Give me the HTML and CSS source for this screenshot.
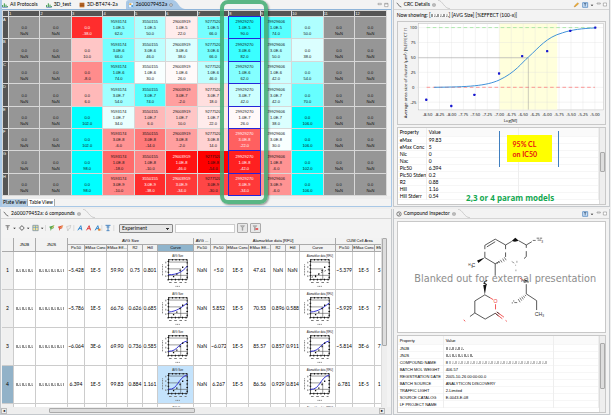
FILE: index.html
```html
<!DOCTYPE html>
<html lang="en">
<head>
<meta charset="utf-8">
<title>Screening workbench</title>
<link rel="stylesheet" href="styles.css">
</head>
<body>
<main class="app">
  <section class="pane plate-pane">
    <nav class="tabs">
      <a class="tab" href="#"><svg class="ic" viewBox="0 0 18 18"><path d="M2 15V9M7 15V4M12 15V8M16 15v-3" stroke="#3a9a46" stroke-width="3"/><path d="M1 16h16" stroke="#3568a8" stroke-width="2"/></svg>All Protocols</a>
      <a class="tab" href="#"><svg class="ic" viewBox="0 0 18 18"><path d="M2 15V9M7 15V4M12 15V8M16 15v-3" stroke="#3a9a46" stroke-width="3"/><path d="M1 16h16" stroke="#3568a8" stroke-width="2"/></svg>3D_test</a>
      <a class="tab" href="#"><svg class="ic" viewBox="0 0 18 18"><path d="M2 2h14v14H2z" fill="#c8742a"/><path d="M2 6h14M2 11h14" stroke="#7b3b10" stroke-width="2"/></svg>3D-BT474-2a</a>
      <a class="tab active" href="#"><svg class="ic" viewBox="0 0 18 18"><path d="M2 1h14v16H2z" fill="#eef6ff" stroke="#4f8fc8"/><path d="M4 4h6v5H4z" fill="#e0a33c"/><path d="M10 9h5v6h-5z" fill="#5aa0dc"/></svg>2600079452a <svg class="close" viewBox="0 0 12 12"><path d="M2 2l8 8M10 2l-8 8" stroke="#777" stroke-width="4"/><path d="M2 2l8 8M10 2l-8 8" stroke="#fff" stroke-width="1.5"/></svg></a>
      <svg class="swoop" viewBox="0 0 36 27" preserveAspectRatio="none"><path d="M0 0C14 0 18 27 36 27H0z" fill="#a9c8e6"/></svg>
      <svg class="winctl" viewBox="0 0 36 18"><path d="M3 4h10v4H3zM23 4h10v10H23zM23 6h10" fill="#fff" stroke="#777" stroke-width="1.5"/></svg>
    </nav>
    <div class="plate-wrap"><table class="plate" id="plate"></table></div>
    <nav class="views"><a class="on" href="#">Plate View</a><a href="#">Table View</a></nav>
    <div class="marker"></div>
  </section>

  <section class="pane">
    <header class="bar">
      <svg class="ic" viewBox="0 0 18 18"><path d="M2 3c5 0 5 11 14 12" fill="none" stroke="#333" stroke-width="2"/></svg>
      <span>CRC Details</span>
      <svg class="close" viewBox="0 0 12 12"><path d="M2 2l8 8M10 2l-8 8" stroke="#777" stroke-width="4"/><path d="M2 2l8 8M10 2l-8 8" stroke="#fff" stroke-width="1.5"/></svg>
      <svg class="curve" viewBox="0 0 36 27" preserveAspectRatio="none"><path d="M0 1C14 1 18 26 36 26" fill="none" stroke="#bbb" stroke-width="2"/></svg>
      <svg class="tools wide" viewBox="0 0 102 18"><path d="M3 15l3-5 8-8 3 3-8 8z" fill="#f0b030" stroke="#a86a20"/><path d="M29 2h15v14H29z" fill="#cfe4fa" stroke="#3d78b8" stroke-width="2"/><path d="M33 5h7M36.500 5v8" stroke="#246" stroke-width="2"/><path d="M53 8h8l-4 4z" fill="#111"/><path d="M72 3h10v3H72zM91 3h10v9H91z" fill="#fff" stroke="#777" stroke-width="1.500"/></svg>
    </header>
    <p class="showing">Now showing: [<span class="redact short"></span>] [AVG Size] [%EFFECT (100-x)]</p>
    <div class="box chart"><svg id="crc" viewBox="14 66 638 310" preserveAspectRatio="none"></svg></div>
    <div class="box props">
      <table class="kv crc-kv">
        <colgroup><col class="c-prop"><col class="c-val"><col></colgroup>
        <thead><tr><th>Property</th><th>Value</th><th></th></tr></thead>
        <tbody>
          <tr><td>eMax</td><td>99.83</td><td></td></tr>
          <tr><td>eMax Conc</td><td>5</td><td></td></tr>
          <tr><td>Nic</td><td>0</td><td></td></tr>
          <tr><td>Nac</td><td>0</td><td></td></tr>
          <tr><td>Pic50</td><td>6.394</td><td></td></tr>
          <tr><td>Pic50 Stderr</td><td>0.2</td><td></td></tr>
          <tr><td>R2</td><td>0.88</td><td></td></tr>
          <tr><td>Hill</td><td>1.16</td><td></td></tr>
          <tr><td>Hill Stderr</td><td>0.54</td><td></td></tr>
        </tbody>
      </table>
      <div class="vbar"><i class="thumb mid"></i></div>
      <div class="range"><span>95% CL<br>on IC50</span></div>
      <div class="models">2,3 or 4 param models</div>
    </div>
  </section>

  <section class="pane">
    <header class="bar">
      <svg class="ic" viewBox="0 0 18 18"><path d="M2 3c5 0 5 11 14 12" fill="none" stroke="#333" stroke-width="2"/></svg>
      <span>2600079452a: 6 compounds</span>
      <svg class="close" viewBox="0 0 12 12"><path d="M2 2l8 8M10 2l-8 8" stroke="#777" stroke-width="4"/><path d="M2 2l8 8M10 2l-8 8" stroke="#fff" stroke-width="1.5"/></svg>
      <svg class="curve" viewBox="0 0 36 27" preserveAspectRatio="none"><path d="M0 1C14 1 18 26 36 26" fill="none" stroke="#bbb" stroke-width="2"/></svg>
    </header>
    <div class="toolbar">
      <svg class="tb-icons" viewBox="14 0 332 24" aria-hidden="true">
        <path d="M18 5h13M24.500 5v13M21 9h7" stroke="#888" stroke-width="3"/><path d="M41 11h8l-4 4zM82 11h8l-4 4zM124 11h8l-4 4z" fill="#222"/>
        <circle cx="67" cy="12" r="5.500" fill="none" stroke="#777" stroke-width="2.500"/><path d="M67 3v4M67 17v4M58 12h4M72 12h4" stroke="#777" stroke-width="2"/>
        <path d="M100 4h16v16h-16z" fill="#f5e59a" stroke="#68849f" stroke-width="2"/><path d="M108 5v14M100 10h16" stroke="#5d95c8" stroke-width="2"/>
        <path d="M138 3v18M223 3v18M307 3v18M343 3v18" stroke="#aaa"/>
        <path d="M149 8l15-4-2 9-6 2-2 6-2-8z" fill="#4da651"/><path d="M175 8l15-4-2 9-6 2-2 6-2-8z" fill="#df5041"/><path d="M201 8l13-4-2 9-5 2-2 6-2-8z" fill="#eee" stroke="#999"/>
        <path d="M156 13l8-8M182 13l8-8" stroke="#f3c460" stroke-width="3"/>
        <path d="M235 19l9-14 3 14M238 14h8" fill="none" stroke="#2f87cf" stroke-width="3"/><path d="M261 19l8-14 4 14M264 14h8" fill="none" stroke="#df4040" stroke-width="3"/><path d="M287 19l8-14 4 14M290 14h8" fill="none" stroke="#2f87cf" stroke-width="3"/><path d="M296 14h7v6h-7z" fill="#e7892f"/>
        <path d="M318 4h15M325.500 4v15M321 9h9M321 20h9" stroke="#4d87c1" stroke-width="3"/>
      </svg>
      <select aria-label="Group by"><option>Experiment</option></select>
      <input type="text" aria-label="Filter">
      <button type="button" aria-label="Apply filter"><svg viewBox="0 0 18 18"><path d="M3 2h12l-5 6v8H8V8z" fill="#bbb" stroke="#666"/></svg></button>
      <button type="button" aria-label="Clear filter"><svg viewBox="0 0 18 18"><path d="M2 2h11l-5 6v8H6V8z" fill="#bbb" stroke="#666"/><path d="M9 12h8" stroke="#d22" stroke-width="4"/></svg></button>
    </div>
    <div class="grid-wrap">
      <div class="grid-clip"><table class="grid" id="grid"></table></div>
      <div class="vbar"><i class="thumb low"></i></div>
    </div>
    <div class="hbar"><b>◂</b><i></i><b>▸</b></div>
  </section>

  <section class="pane">
    <header class="bar">
      <svg class="ic" viewBox="0 0 18 18"><circle cx="9" cy="9" r="6.500" fill="#fff" stroke="#444" stroke-width="2"/><path d="M7 5l5 4-5 4" fill="none" stroke="#555" stroke-width="2"/></svg>
      <span>Compound Inspector</span>
      <svg class="close" viewBox="0 0 12 12"><path d="M2 2l8 8M10 2l-8 8" stroke="#777" stroke-width="4"/><path d="M2 2l8 8M10 2l-8 8" stroke="#fff" stroke-width="1.5"/></svg>
      <svg class="curve" viewBox="0 0 36 27" preserveAspectRatio="none"><path d="M0 1C14 1 18 26 36 26" fill="none" stroke="#bbb" stroke-width="2"/></svg>
      <svg class="tools" viewBox="24 0 78 18"><path d="M29 2h15v14H29z" fill="#cfe4fa" stroke="#3d78b8" stroke-width="2"/><path d="M33 5h7M36.500 5v8" stroke="#246" stroke-width="2"/><path d="M53 8h8l-4 4z" fill="#111"/><path d="M72 3h10v3H72zM91 3h10v9H91z" fill="#fff" stroke="#777" stroke-width="1.500"/></svg>
    </header>
    <div class="box molecule">
      <svg viewBox="14 48 638 340">
        <g fill="none" stroke="#333" stroke-width="2.500">
          <path d="M281 132V120L313 101L345 119V132M287 125L313 109M281 140V158L313 177L326 170M345 142V156M345 119L364 108M386 106L409 119V128M409 138V155L402 161M313 177V214M409 119L426 109"/>
          <path d="M281 273L250 292V329L282 348L313 330M281 273L297 282M250 329L235 340M409 240V270L441 291V320M409 234L397 228"/>
          <path d="M364 170l8 5M380 168v6M377 195v5M376 180v3" stroke="#888"/>
          <path d="M429 105h9M441 98h8M451 98h7M444 104h11" stroke="#555"/>
          <path d="M364 298h4M372 297h9M368 292h4" stroke="#555"/>
        </g>
        <path d="M281 158l-24 9 4 8zM364 107l11-10 11 9-12 3zM281 273l-5-30h10z" fill="#111"/>
        <path d="M277 236l10 6M288 228l-9 6" stroke="#222" stroke-width="4"/>
        <path d="M318 174l2 4M323 169l4 6M329 165l5 8M336 161l5 9M341 157l6 9M405 273l3 4M400 276l4 6M395 279l5 8M389 282l6 9M384 286l6 10" stroke="#333" stroke-width="2"/>
        <path d="M402 226l14 8M401 234l13-4" stroke="#333" stroke-width="4"/>
        <g stroke="#e33" stroke-width="2.500" fill="none"><path d="M297 282l10 6M314 302v16M313 330l22 17M318 326l22 16M389 221l11 7M216 350l4 5M345 352l4 3"/></g>
        <path d="M313 330l10 8M318 326l8 6" stroke="#333" stroke-width="2.500"/>
        <g class="atoms"><text x="308" y="298" class="red">O</text><text x="435" y="339">CH<tspan dy="4" class="sub">3</tspan></text><text x="240" y="186">C</text><text x="230" y="184" class="sub">H</text><text x="238" y="191" class="sub">3</text><text x="455" y="113" class="sub">3</text></g>
        <text class="blank" x="344" y="232">Blanked out for external presentation</text>
      </svg>
    </div>
    <div class="box compound">
      <table class="kv comp-kv">
        <colgroup><col class="c-prop"><col class="c-val"><col></colgroup>
        <thead><tr><th>Property</th><th>Value</th><th></th></tr></thead>
        <tbody>
          <tr><td>JNJB</td><td><span class="redact short"></span></td><td></td></tr>
          <tr><td>JNJS</td><td><span class="redact"></span></td><td></td></tr>
          <tr><td>COMPOUND NAME</td><td>8 <span class="redact long"></span></td><td></td></tr>
          <tr><td>BATCH MOL WEIGHT</td><td>406.57</td><td></td></tr>
          <tr><td>REGISTRATION DATE</td><td>2005-10-26 00:00:00.0</td><td></td></tr>
          <tr><td>BATCH SOURCE</td><td>ANALYTICON DISCOVERY</td><td></td></tr>
          <tr><td>TRAFFIC LIGHT</td><td>2-Limited</td><td></td></tr>
          <tr><td>SOURCE CATALOG</td><td>E-0043-E-08</td><td></td></tr>
          <tr><td>LF PROJECT NAME</td><td></td><td></td></tr>
        </tbody>
      </table>
      <div class="vbar"><i class="thumb high"></i></div>
    </div>
  </section>
</main>
<script src="app.js"></script>
</body>
</html>
```
FILE: styles.css
```css
* { box-sizing: border-box; }
html, body { height: 100%; }
body {
  margin: 0;
  background: #eeeeee;
  color: #000;
  font: 5px/7px "Lato", sans-serif;
  overflow: hidden;
}
a { color: inherit; text-decoration: none; }
p { margin: 0; }
table { border-spacing: 0; table-layout: fixed; width: 100%; }
th, td { padding: 0; font-weight: normal; white-space: nowrap; overflow: hidden; }
svg { display: block; }

.app {
  height: 100vh;
  display: grid;
  grid-template-columns: minmax(0, 391fr) minmax(0, 217fr);
  grid-template-rows: minmax(0, 207fr) minmax(0, 206fr);
  gap: 2px 1px;
  padding-right: 1px;
}
.pane {
  position: relative;
  display: flex;
  flex-direction: column;
  min-height: 0;
  background: #f3f3f3;
  border: 1px solid #c4c8cc;
  border-width: 0 1px 1px 1px;
}
.ic { width: 6px; height: 6px; flex: none; }
.close { width: 4px; height: 4px; flex: none; }
.curve { width: 12px; height: 9px; flex: none; }

.plate-pane { border: 0 solid #a9c8e6; border-width: 0 1px 1px 2px; }
.tabs { display: flex; height: 10px; border-bottom: 1px solid #8fb4d8; }
.tab { display: flex; align-items: center; gap: 2px; padding: 0 8px 0 0; }
.tab.active { background: #a9c8e6; padding: 0 0 0 2px; border-radius: 3px 0 0 0; }
.swoop { width: 12px; height: 9px; }
.winctl { width: 12px; height: 6px; margin: 2px 2px 0 auto; }
.plate-wrap { flex: 1; min-height: 0; padding: 0 4px 0 0; }
.plate { height: 100%; border-spacing: 1px; background: #d8d8d8; font: 4px/6px "Liberation Sans", sans-serif; text-align: center; color: #111; }
.plate th { background: #555; color: #fff; text-align: left; vertical-align: top; line-height: 5px; }
.plate tr:first-child th { height: 5px; }
.plate th:first-child { width: 5px; }
.plate td { vertical-align: bottom; padding-bottom: 1px; background: #969696; }
.plate td.light { color: #fff; }
.plate td.sel { outline: 1px solid #2626d8; }
.views { display: flex; height: 10px; align-items: flex-end; border-top: 3px solid #eee; }
.views a { padding: 0 1px; background: #fff; border-right: 1px solid #aaa; }
.views a.on { background: #b8cfe4; }
.marker {
  position: absolute;
  left: 56%; width: 12.5%; top: 0; bottom: 2px;
  border: 4px solid rgba(62, 170, 112, .85);
  border-radius: 8px;
  box-shadow: 1px 1px 2px rgba(0, 0, 0, .4);
}

.bar { display: flex; align-items: center; gap: 2px; height: 10px; padding: 0 2px; flex: none; border-bottom: 1px solid #d5d5d5; }
.tools { width: 26px; height: 6px; margin-left: auto; }
.tools.wide { width: 34px; }
.showing { padding: 2px 3px; line-height: 7px; }
.box { position: relative; margin: 0 3px; background: #fff; border: 1px solid #c8c8c8; min-height: 0; }
.chart { flex: 104 0 0; margin-bottom: 2px; background: #f3f3f3; }
.chart svg, .molecule svg { width: 100%; height: 100%; }
.props { flex: 78 0 0; margin-bottom: 1px; display: flex; }
.molecule { flex: 113 0 0; margin-top: 2px; margin-bottom: 2px; }
.compound { flex: 78 0 0; margin-bottom: 1px; display: flex; overflow: hidden; }
#crc text { font: 13px "Open Sans", sans-serif; fill: #000; text-anchor: middle; }
.atoms text { font: 16px "Liberation Sans", sans-serif; fill: #333; }
.atoms .sub { font-size: 10px; }
.atoms .red { fill: #e33; }
.blank { font: 30px "DejaVu Sans", sans-serif; fill: #8d8d8d; text-anchor: middle; }

.kv { flex: 1; align-self: flex-start; }
.kv th, .kv td { text-align: left; padding-left: 2px; height: 7px; border-right: 1px solid #eee; box-shadow: inset 0 -1px #f6f6f6; }
.kv th { height: 9px; background: #fafafa; }
.crc-kv .c-prop { width: 29px; }
.crc-kv .c-val { width: 92px; }
.comp-kv { font-family: "Liberation Sans", sans-serif; font-size: 4px; }
.comp-kv .c-prop { width: 46px; }
.comp-kv .c-val { width: 110px; }
.vbar { width: 6px; flex: none; background: #eee; border-left: 1px solid #ddd; display: flex; flex-direction: column; }
.thumb { margin: 0 0 auto; border: 1px solid #aaa; border-radius: 1px; background: #ddd; }
.thumb.mid { margin-top: 24px; height: 20px; }
.thumb.high { margin-top: 7px; height: 46px; }
.thumb.low { margin-top: 0; height: 108px; }
.range {
  position: absolute;
  left: 49%; width: 29%; top: 3px; height: 36px;
  border: 1px solid #3f7fc0; border-width: 0 1px;
  display: flex; align-items: center; justify-content: center;
}
.range span { background: #ffff00; color: #e81010; font: bold 7px/10px "Lato", sans-serif; padding: 4px 15px 3px 6px; }
.models { position: absolute; left: 33%; bottom: 1px; font: bold 8px/10px "Open Sans", sans-serif; color: #12a850; white-space: nowrap; }

.redact { display: inline-block; width: 27px; height: 3px; background: repeating-linear-gradient(90deg, #999 0 2px, #fff 2px 3px, #ccc 3px 5px, #fff 5px 6px); border-bottom: 1px dotted #999; }
.redact.short { width: 18px; }
.redact.long { width: 98px; opacity: .6; }

.toolbar { display: flex; align-items: center; height: 18px; flex: none; padding-left: 3px; }
.tb-icons { width: 111px; height: 8px; margin-right: 4px; }
.toolbar select {
  width: 54px; height: 9px; padding: 0 2px; border: 1px solid #888; border-radius: 1px;
  font: inherit; color: #111; appearance: none;
  background: linear-gradient(135deg, #333 50%, transparent 50%) 48px 3px / 2px 2px no-repeat, linear-gradient(225deg, #333 50%, transparent 50%) 46px 3px / 2px 2px no-repeat, #e6e6e6;
}
.toolbar input { width: 60px; height: 9px; margin: 0 2px; padding: 0 1px; border: 1px solid #ccc; font: inherit; background: #fff; }
.toolbar button { width: 11px; height: 10px; margin-right: 2px; padding: 1px; border: 1px solid #aaa; border-radius: 1px; background: #e8e8e8; }
.toolbar button svg { width: 7px; height: 6px; }
.grid-wrap { flex: 1; min-height: 0; display: flex; margin: 1px 4px 0 1px; }
.grid-clip { flex: 1; min-width: 0; overflow: hidden; background: #fff; }
.grid { text-align: center; }
.grid th, .grid td { border-right: 1px solid #ccc; border-bottom: 1px solid #ccc; }
.grid th { height: 7px; font-family: "Liberation Sans", sans-serif; font-size: 4px; line-height: 6px; background: #f2f2f2; border-color: #aaa; }
.grid th.on { background: #8fb4cc; }
.grid td { height: 38px; }
.grid td:first-child { background: #f0f0f0; }
.grid tr.cur td:first-child { background: #92b2c8; }
.grid tr.cur td.curve-a { background: #c4e3fc; }
.grid .redact { width: 80%; }
.mini { width: 100%; height: 37px; }
.mini text { font: 8px "Liberation Sans", sans-serif; text-anchor: middle; fill: #111; }
.hbar { display: flex; height: 7px; flex: none; background: #eee; align-items: center; padding-right: 6px; }
.hbar b { width: 6px; height: 6px; border: 1px solid #bbb; font-size: 4px; line-height: 4px; text-align: center; }
.hbar i { width: 38%; height: 5px; border: 1px solid #aaa; border-radius: 1px; background: #ddd; margin-left: 11%; margin-right: auto; }
```
FILE: app.js
```js
// Plate view: identifiers and effects by column, concentrations by row.
const conc = ['1.0E-5', '3.0E-6', '1.0E-6', '3.0E-7', '1.0E-7', '3.0E-8', '1.0E-8', '3.0E-9'];
const ids = { 4: '9593174', 5: '3550155', 6: '29003919', 7: '9277520', 8: '29929270', 9: '29929606' };
const effect = {
  3: [-38, 10, -8, 6, 102, 102, 98, 98],
  4: [62, 66, 74, 54, 34, -6, -18, -10],
  5: [50, 46, 30, 74, 6, -14, -10, -38],
  6: [22, 38, 26, -2, 10, -2, -46, -34],
  7: [66, 66, 46, 18, 22, 14, -54, -30],
  8: [90, 82, 62, 42, 26, -22, -42, -34],
  9: [74, 50, 42, 42, 38, 30, -6, -6],
  10: [50, 38, 54, 70, 106, 106, 102, 106]
};
function heat(v) {
  const t = v >= 28 ? (v - 28) / 70 : (28 - v) / 80;
  const c = Math.round(255 * Math.max(0, 1 - t));
  return v >= 28 ? `rgb(${c},255,255)` : `rgb(255,${c},${c})`;
}
let html = '<tr><th></th>';
for (let c = 1; c <= 12; c++) html += `<th>${c}</th>`;
html += '</tr>';
conc.forEach((k, r) => {
  html += `<tr><th>${'ABCDEFGH'[r]}</th>`;
  for (let c = 1; c <= 12; c++) {
    if (!effect[c]) { html += '<td>0.0<br>NaN</td>'; continue; }
    const v = effect[c][r];
    const cls = [c === 8 ? 'sel' : '', v < -20 && c !== 7 ? 'light' : ''].join(' ');
    html += `<td class="${cls}" style="background:${heat(v)}">${ids[c] ? ids[c] + '<br>' + k : '0.0'}<br>${v.toFixed(1)}</td>`;
  }
  html += '</tr>';
});
document.getElementById('plate').innerHTML = html;

// Dose-response chart.
const X = v => 105 + (v + 8.5) * 147.1;
const Y = v => 265 - v * 1.82;
let s = '<rect x="76" y="70" width="571" height="264" fill="#fff" stroke="#999"/><rect x="326" y="71" width="178" height="262" fill="#ffffdc"/>';
for (let i = 0; i <= 14; i++) {
  const v = -8.5 + i * 0.25;
  s += `<path d="M${X(v)} 71V338" stroke="#ddd"/><text x="${X(v)}" y="351">${v.toFixed(2)}</text>`;
}
for (let v = -25; v <= 100; v += 25) s += `<path d="M72 ${Y(v)}H647" stroke="#ddd"/><text x="61" y="${Y(v) + 5}">${v}</text>`;
s += '<path d="M102 83H620" stroke="#8be08b" stroke-width="2" stroke-dasharray="11 8"/><path d="M102 265H620" stroke="#f66" stroke-width="2" stroke-dasharray="11 8"/><path d="M76 175H415V333" fill="none" stroke="#999" stroke-width="1.5"/>';
s += '<path d="M125 265C230 264 285 261 325 243C375 220 395 190 415 173C450 142 470 113 520 99C550 89 580 86 621 84" fill="none" stroke="#3a8fd8" stroke-width="3"/>';
[[101, 303], [178, 322], [249, 288], [325, 223], [396, 170], [473, 155], [544, 93], [621, 83]].forEach(p => {
  s += `<rect x="${p[0] - 3.5}" y="${p[1] - 3.5}" width="7" height="7" rx="2" fill="#1818d0"/>`;
});
s += '<text x="360" y="370">Log[M]</text><text transform="translate(42 221) rotate(-90)">Average area size of cluster (µm²) [%EFFECT (1</text>';
document.getElementById('crc').innerHTML = s;

// Compound grid.
const rows = [
  ['~5.428', '1E-5', '59.90', '0.75', '0.801', 'NaN', '&lt;5.0', '1E-5', '47.61', 'NaN', 'NaN', '~5.379', '1E-5', '5'],
  ['~5.786', '1E-5', '66.76', '0.626', '0.685', 'NaN', '5.852', '1E-5', '70.53', '0.896', '0.588', '~5.929', '1E-5', '7'],
  ['~6.064', '3E-6', '69.90', '0.736', '0.585', 'NaN', '~6.072', '1E-5', '85.57', '0.857', '0.911', '~5.814', '3E-6', '7'],
  ['6.394', '1E-5', '99.83', '0.884', '1.161', 'NaN', '6.267', '1E-5', '86.56', '0.929', '0.814', '6.781', '1E-5', '1']
];
function mini(title, n, scatter) {
  const paths = ['M32 70C60 70 74 62 90 44', 'M32 68C58 66 72 54 90 40', 'M32 72C62 72 62 46 90 40', 'M32 72C62 74 62 34 90 28'];
  const curve = scatter ? 'stroke="#333" stroke-dasharray="4 7" d="M36 78L90 52"' : `stroke="#3030d0" d="${paths[n]}"`;
  return `<svg class="mini" viewBox="0 0 108 114"><text x="61" y="15">${title}</text>
<rect x="32" y="24" width="58" height="61" fill="none" stroke="#111" stroke-width="2"/><path d="M32 31H90M32 52H70V85M32 72H90" fill="none" stroke="#333" stroke-width="1.5"/>
<rect x="32" y="24" width="58" height="61" fill="none" stroke="#111" stroke-width="5" stroke-dasharray="3 8"/>
<path fill="none" stroke-width="3" ${curve}/><path d="M46 76h4M56 68h4M66 57h4M74 47h4" stroke="#111" stroke-width="4"/>
<path d="M34 94h8M50 94h8M66 94h8M82 94h6M24 30v5M24 44v5M24 58v5M24 72v5" stroke="#777" stroke-width="3"/><path d="M14 38v36M54 106h14" stroke="#777" stroke-width="3" stroke-dasharray="3 2"/></svg>`;
}
const widths = [12, 22, 32, 17, 22, 21, 15, 15, 36, 17, 16, 22, 22, 15, 14, 36, 17, 22, 9];
const heads = ['Pic50', 'EMax Conc', 'EMax Eff...', 'R2', 'Hill', 'Curve'];
let g = '<colgroup>' + widths.map(w => `<col style="width:${w}px">`).join('') + '</colgroup>';
g += '<tr><th rowspan="2"></th><th rowspan="2">JNJB</th><th rowspan="2">JNJS</th><th colspan="6">AVG Size</th><th>AVG ...</th><th colspan="6">Alamarblue data [RFU]</th><th colspan="3">CUM Cell Area</th></tr><tr>';
g += heads.map((h, i) => `<th class="${i === 5 ? 'on' : ''}">${h}</th>`).join('') + '<th>Pic50</th>' + heads.map(h => `<th>${h}</th>`).join('') + '<th>Pic50</th><th>EMax Conc</th><th>EM</th></tr>';
rows.forEach((r, i) => {
  const c = r.map(v => `<td>${v}</td>`);
  c.splice(5, 0, `<td class="curve-a">${mini('AVG Size', i)}</td>`);
  c.splice(12, 0, `<td>${mini('Alamarblue data [RFU]', i, i === 0)}</td>`);
  g += `<tr class="${i === 3 ? 'cur' : ''}"><td>${i + 1}</td><td><span class="redact"></span></td><td><span class="redact"></span></td>${c.join('')}</tr>`;
});
g += '<tr>' + widths.map((w, i) => `<td>${i === 8 ? mini('AVG Size', 0) : i === 15 ? mini('Alamarblue data [RFU]', 0) : ''}</td>`).join('') + '</tr>';
document.getElementById('grid').innerHTML = g;
```
